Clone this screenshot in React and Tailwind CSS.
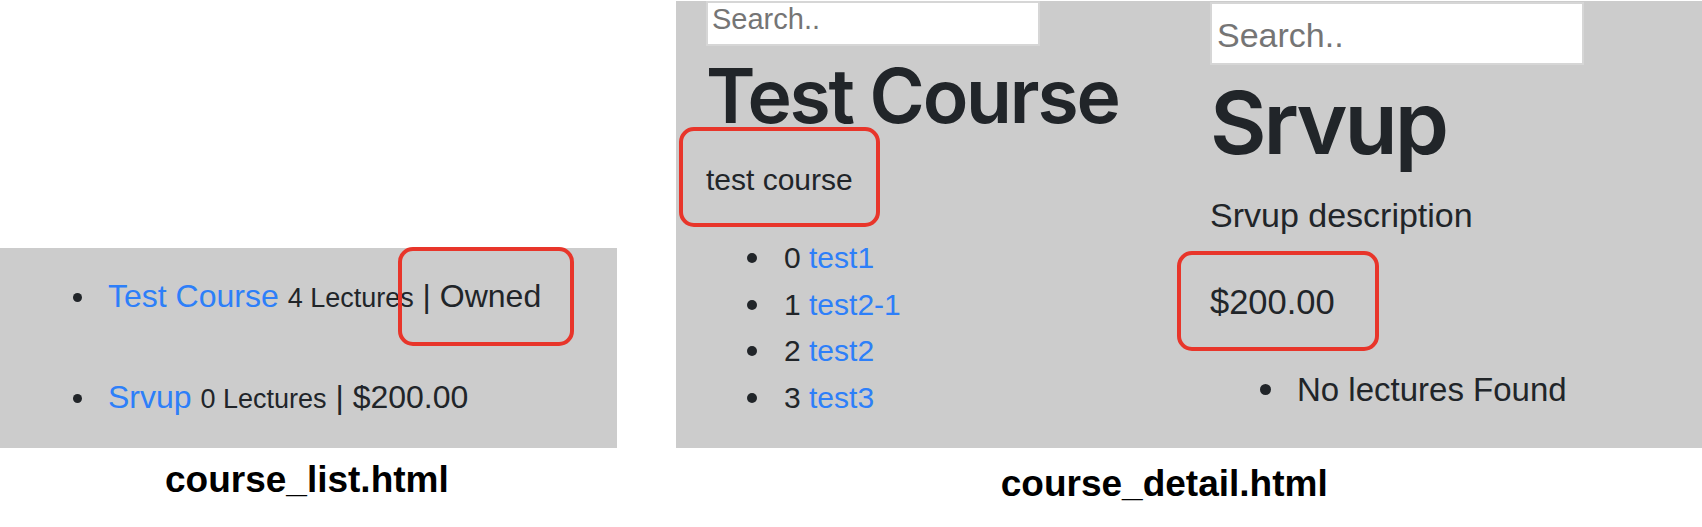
import React from "react";

const FONT = { fontFamily: '"Liberation Sans", Arial, sans-serif' };
const HFONT = { fontFamily: 'Inter, "Liberation Sans", Arial, sans-serif' };

export default function App() {
  return (
    <div className="relative w-[1702px] h-[527px] bg-white overflow-hidden text-[#212529]" style={FONT}>
      {/* Top row: two screenshots */}
      <div className="flex items-start h-[448px]">
        {/* course_list */}
        <div className="w-[617px] h-[200px] mt-[248px] bg-[#cccccc] pt-[26px] flex flex-col gap-[55px]">
          <div className="flex items-center h-[46px]">
            <span className="ml-[73px] w-[9px] h-[9px] rounded-full bg-[#212529] shrink-0" />
            <span className="ml-[26px] text-[32px] leading-[46px] whitespace-nowrap">
              <a className="text-[#2d7ff9]">Test Course</a>{" "}
              <small className="text-[27px]">4 Lectures</small> | Owned
            </span>
          </div>
          <div className="flex items-center h-[46px]">
            <span className="ml-[73px] w-[9px] h-[9px] rounded-full bg-[#212529] shrink-0" />
            <span className="ml-[26px] text-[32px] leading-[46px] whitespace-nowrap">
              <a className="text-[#2d7ff9]">Srvup</a>{" "}
              <small className="text-[27px]">0 Lectures</small> | $200.00
            </span>
          </div>
        </div>

        {/* course_detail */}
        <div className="ml-[59px] w-[1026px] h-[447px] mt-px bg-[#cccccc] flex">
          {/* Column A */}
          <div className="w-[534px] pl-[30px] flex flex-col">
            <div className="w-[334px] h-[45px] bg-white border-2 border-[#d6d6d6] pl-[4px] text-[29px] leading-[33px] text-[#757575]">
              Search..
            </div>
            <h1 className="mt-[5px] mb-[16px] text-[75px] leading-[90px] font-semibold tracking-[-2.2px]" style={HFONT}>
              Test Course
            </h1>
            <p className="text-[30px] leading-[45px] mb-[33px]">test course</p>
            <ul className="flex flex-col">
              {[
                ["0", "test1"],
                ["1", "test2-1"],
                ["2", "test2"],
                ["3", "test3"],
              ].map(([n, t]) => (
                <li key={t} className="flex items-center h-[46.5px]">
                  <span className="ml-[41px] w-[10px] h-[10px] rounded-full bg-[#212529] shrink-0" />
                  <span className="ml-[27px] text-[30px] leading-[46px] whitespace-nowrap">
                    {n} <a className="text-[#2d7ff9]">{t}</a>
                  </span>
                </li>
              ))}
            </ul>
          </div>
          {/* Column B */}
          <div className="flex flex-col pt-px">
            <div className="w-[374px] h-[63px] bg-white border-2 border-[#d6d6d6] pl-[5px] pt-[12px] text-[34px] leading-[39px] text-[#757575]">
              Search..
            </div>
            <h1 className="mt-[6px] mb-[15px] text-[87px] leading-[104px] font-semibold tracking-[-3px]" style={HFONT}>
              Srvup
            </h1>
            <p className="text-[34px] leading-[51px] mb-[36px]">Srvup description</p>
            <p className="text-[34.5px] leading-[51px] mb-[36px]">$200.00</p>
            <ul>
              <li className="flex items-center h-[51px]">
                <span className="ml-[50px] w-[11px] h-[11px] rounded-full bg-[#212529] shrink-0" />
                <span className="ml-[26px] text-[33px] leading-[51px] whitespace-nowrap">No lectures Found</span>
              </li>
            </ul>
          </div>
        </div>
      </div>

      {/* Captions */}
      <div className="flex items-start font-bold text-[37px] leading-[43px] text-black">
        <div className="ml-[165px] mt-[10px] whitespace-nowrap">course_list.html</div>
        <div className="ml-[552px] mt-[14px] whitespace-nowrap">course_detail.html</div>
      </div>

      {/* Red annotation boxes */}
      <div className="absolute left-[398px] top-[247px] w-[176px] h-[99px] border-[4px] border-[#e8352a] rounded-[15px]" />
      <div className="absolute left-[679px] top-[127px] w-[201px] h-[100px] border-[4px] border-[#e8352a] rounded-[15px]" />
      <div className="absolute left-[1177px] top-[251px] w-[202px] h-[100px] border-[4px] border-[#e8352a] rounded-[15px]" />
    </div>
  );
}
